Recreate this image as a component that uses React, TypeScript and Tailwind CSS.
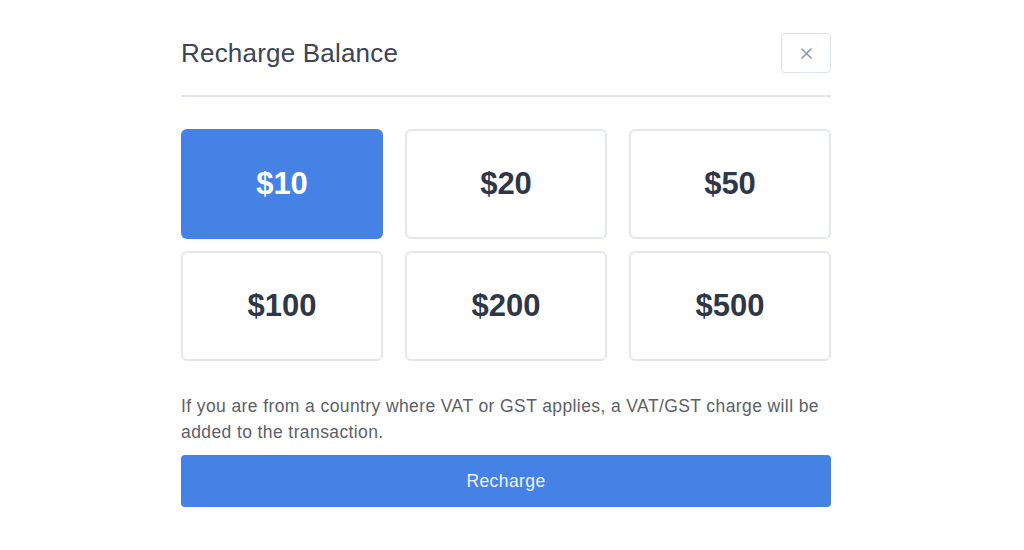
import React, { useState } from "react";

const amounts = [10, 20, 50, 100, 200, 500];

export default function App() {
  const [sel, setSel] = useState(10);
  return (
    <div className="w-[1024px] h-[550px] bg-white" style={{ fontFamily: '"Liberation Sans", Arial, sans-serif' }}>
      <div className="ml-[181px] w-[650px] pt-[33px]">
        <div className="flex items-center justify-between pb-[22px] border-b-2 border-[#e3e7ed]">
          <h1 className="text-[26px] leading-[40px] tracking-[0.2px] text-[#3d4553]">Recharge Balance</h1>
          <button className="w-[50px] h-[40px] rounded-[4px] border border-[#dde1e8] flex items-center justify-center text-[#8c95a5]">
            <svg width="11" height="11" viewBox="0 0 11 11" fill="none" stroke="currentColor" strokeWidth="1.6" strokeLinecap="round">
              <path d="M1 1L10 10M10 1L1 10" />
            </svg>
          </button>
        </div>
        <div className="grid grid-cols-3 gap-x-[22px] gap-y-[12px] mt-[32px]">
          {amounts.map((a) => (
            <button
              key={a}
              onClick={() => setSel(a)}
              className={
                a === sel
                  ? "h-[110px] rounded-[6px] bg-[#4682e6] text-white text-[31px] font-bold flex items-center justify-center"
                  : "h-[110px] rounded-[6px] border-2 border-[#e4e7ec] bg-white text-[#2f3747] text-[31px] font-bold flex items-center justify-center"
              }
            >
              ${a}
            </button>
          ))}
        </div>
        <p className="mt-[32px] text-[17.5px] leading-[26px] tracking-[0.4px] text-[#5c5f66]">
          If you are from a country where VAT or GST applies, a VAT/GST charge will be added to the transaction.
        </p>
        <button className="mt-[10px] w-full h-[52px] rounded-[4px] bg-[#4682e6] text-[#eef3fd] text-[17.5px] tracking-[0.4px]">
          Recharge
        </button>
      </div>
    </div>
  );
}
